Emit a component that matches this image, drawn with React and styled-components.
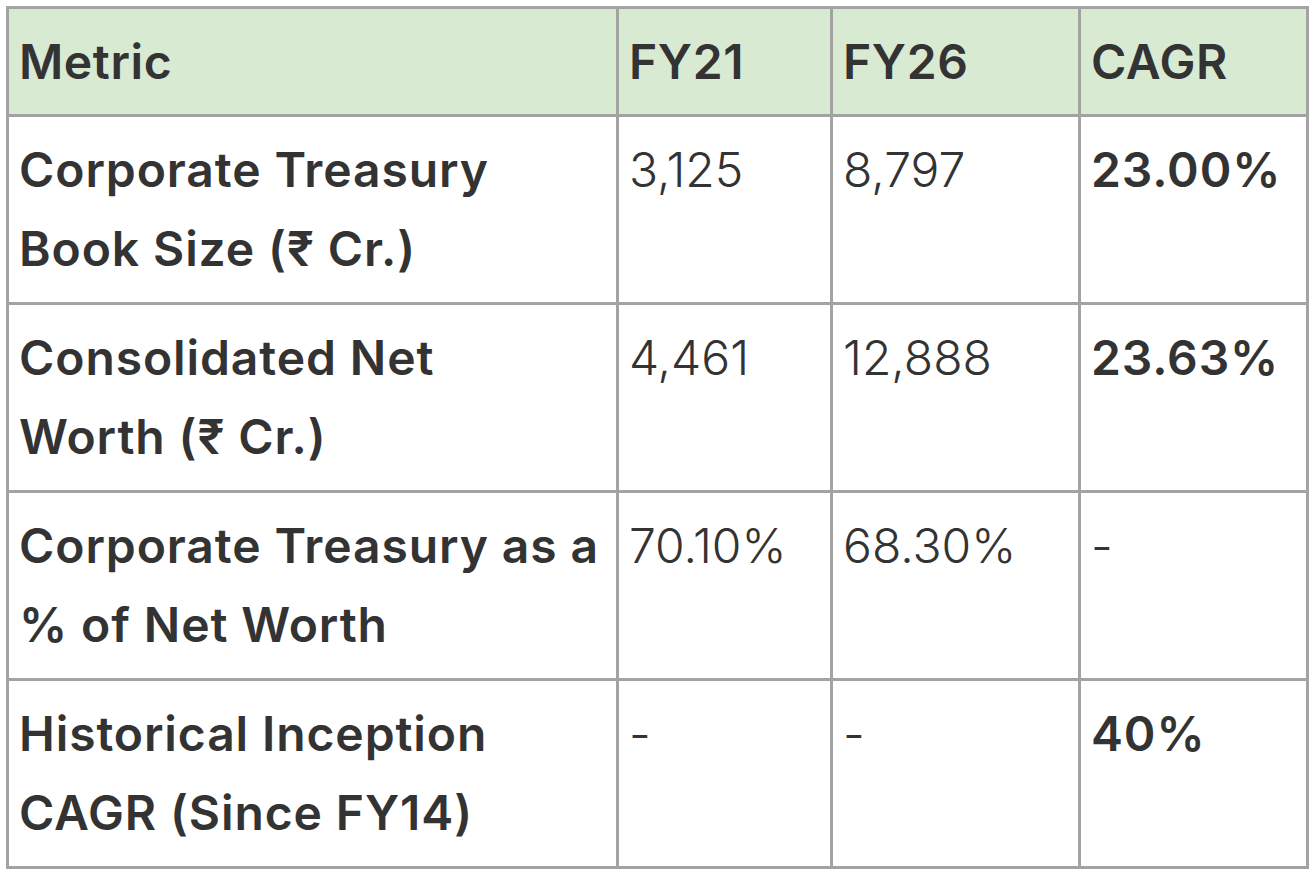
import React from "react";
import styled, { createGlobalStyle } from "styled-components";

const GlobalStyle = createGlobalStyle`
  html, body {
    margin: 0;
    padding: 0;
    background: #ffffff;
  }
  body {
    font-family: Inter, "Noto Sans", "Liberation Sans", sans-serif;
    color: #333333;
  }
`;

// metric labels are kept as lines so they break where the sheet breaks them
const rows = [
  { metric: ["Corporate Treasury", "Book Size (₹ Cr.)"], fy21: "3,125", fy26: "8,797", cagr: "23.00%" },
  { metric: ["Consolidated Net", "Worth (₹ Cr.)"], fy21: "4,461", fy26: "12,888", cagr: "23.63%" },
  { metric: ["Corporate Treasury as a", "% of Net Worth"], fy21: "70.10%", fy26: "68.30%", cagr: "-", plain: true },
  { metric: ["Historical Inception", "CAGR (Since FY14)"], fy21: "-", fy26: "-", cagr: "40%" },
];

const App = () => {
  return (
    <Page>
      <GlobalStyle />
      <Table>
        <colgroup>
          <col style={{ width: 610 }} />
          <col style={{ width: 214 }} />
          <col style={{ width: 248 }} />
          <col style={{ width: 228 }} />
        </colgroup>
        <thead>
          <tr>
            <Head>Metric</Head>
            <Head>FY21</Head>
            <Head>FY26</Head>
            <Head>CAGR</Head>
          </tr>
        </thead>
        <tbody>
          {rows.map((r) => (
            <tr key={r.metric[0] + r.metric[1]}>
              <Cell $bold>
                {r.metric.map((line) => (
                  <Line key={line}>{line}</Line>
                ))}
              </Cell>
              <Cell>{r.fy21}</Cell>
              <Cell>{r.fy26}</Cell>
              <Cell $bold={!r.plain}>{r.cagr}</Cell>
            </tr>
          ))}
        </tbody>
      </Table>
    </Page>
  );
};

export default App;

const Page = styled.div`
  padding: 6px;
  width: 1312px;
  height: 872px;
  box-sizing: border-box;
`;

const Table = styled.table`
  width: 1300px;
  border-collapse: collapse;
  table-layout: fixed;
  border: 3px solid #a3a3a3;
`;

const Head = styled.th`
  height: 105px;
  background: #d9ead3;
  border: 3px solid #a3a3a3;
  padding: 0 10px;
  text-align: left;
  font-weight: 600;
  font-size: 48px;
  letter-spacing: 0.6px;
  line-height: 79px;
  color: #333333;
  vertical-align: middle;
`;

const Cell = styled.td`
  height: 188px;
  border: 3px solid #a3a3a3;
  padding: 13px 10px 0;
  text-align: left;
  vertical-align: top;
  font-size: 48px;
  letter-spacing: ${(p) => (p.$bold ? "0.9px" : "0")};
  line-height: 79px;
  font-weight: ${(p) => (p.$bold ? 600 : 300)};
  color: #333333;
  box-sizing: border-box;
`;

const Line = styled.span`
  display: block;
  white-space: nowrap;
`;
